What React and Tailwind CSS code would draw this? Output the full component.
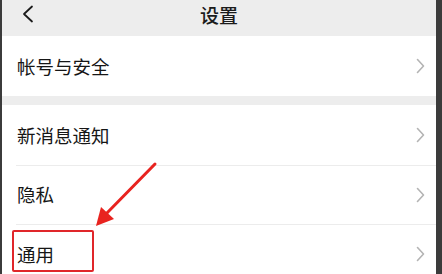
import React from "react";

const rows = [
  { group: 1, label: "帐号与安全" },
  { group: 2, label: "新消息通知" },
  { group: 2, label: "隐私" },
  { group: 2, label: "通用" },
];

function Chevron() {
  return (
    <svg width="9" height="16" viewBox="0 0 9 16" fill="none" stroke="#b4b4b4" strokeWidth="1.6" strokeLinecap="round" strokeLinejoin="round">
      <path d="M1.5 1.5L7.5 8L1.5 14.5" />
    </svg>
  );
}

function Row({ label, divider, short }) {
  return (
    <div className={`relative shrink-0 bg-white flex items-center pl-[15px] pr-[11px] ${short ? "h-[59px]" : "h-[60px]"}`}>
      {divider && <div className="absolute top-0 left-[14px] right-0 h-px bg-[#ececec]" />}
      <span className="flex-1 text-[18.5px] text-[#161616] leading-none">{label}</span>
      <Chevron />
    </div>
  );
}

export default function App() {
  return (
    <div
      className="w-[442px] h-[274px] overflow-hidden flex bg-[#3b3b3b]"
      style={{ fontFamily: '"Noto Sans CJK SC", "Noto Sans", sans-serif' }}
    >
      <div className="w-[2px] shrink-0" />
      <div className="relative flex-1 flex flex-col bg-[#ededed] overflow-hidden">
        {/* Header */}
        <div className="relative h-[36px] shrink-0 flex items-center justify-center">
          <svg className="absolute left-[20px] top-[5px]" width="12" height="18" viewBox="0 0 12 18" fill="none" stroke="#1b1b1b" strokeWidth="1.8" strokeLinecap="round" strokeLinejoin="round">
            <path d="M10 1.5L2 9L10 16.5" />
          </svg>
          <span className="text-[19px] text-[#1b1b1b] font-medium leading-none -mt-[8px]">设置</span>
        </div>

        <Row label={rows[0].label} />
        <div className="h-[9px] shrink-0" />
        <Row label={rows[1].label} />
        <Row label={rows[2].label} divider short />
        <Row label={rows[3].label} divider />

        {/* Red highlight box */}
        <div className="absolute left-[10px] top-[230px] w-[82px] h-[42px] border-2 border-[#e0262a] rounded-[2px]" />

        {/* Red arrow */}
        <svg className="absolute left-0 top-0" width="436" height="274" viewBox="0 0 436 274" fill="none">
          <line x1="153" y1="164" x2="103" y2="215" stroke="#e8231f" strokeWidth="3" strokeLinecap="round" />
          <polygon points="94,226 99,207 112,219" fill="#e8231f" />
        </svg>
      </div>
      <div className="w-[6px] shrink-0" />
    </div>
  );
}
